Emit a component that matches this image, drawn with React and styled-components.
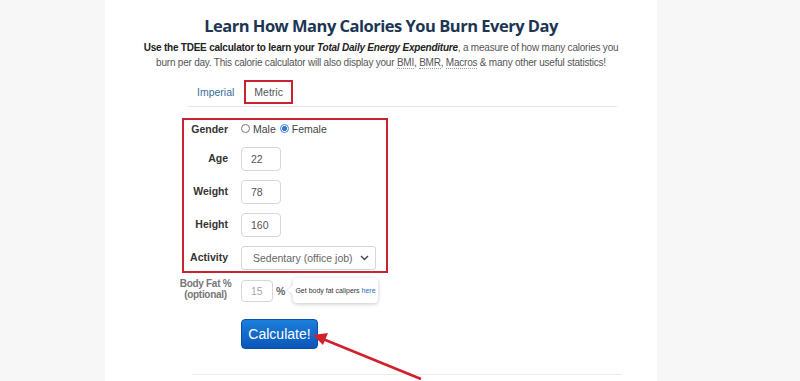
import React from "react";
import styled, { createGlobalStyle } from "styled-components";

const GlobalStyle = createGlobalStyle`
  html, body { margin: 0; padding: 0; }
  body {
    background: #f7f7f7;
    font-family: "Liberation Sans", Arial, sans-serif;
    color: #333;
  }
`;

const Page = styled.div`
  position: relative;
  width: 552px;
  min-height: 381px;
  margin-left: 105px;
  background: #fff;
  overflow: hidden;
`;

const Title = styled.h1`
  margin: 0;
  padding-top: 15px;
  text-align: center;
  font-family: "Open Sans", sans-serif;
  font-weight: 700;
  font-size: 16.5px;
  line-height: 22px;
  letter-spacing: -0.5px;
  color: #1c3553;
`;

const Intro = styled.p`
  margin: 4px auto 0;
  text-align: center;
  font-size: 10px;
  letter-spacing: -0.22px;
  line-height: 14.5px;
  color: #555;
  b { color: #222; }
  abbr {
    text-decoration: none;
    border-bottom: 1px dotted #999;
  }
`;

const Line = styled.span`
  display: block;
  white-space: nowrap;
`;

const Tabs = styled.div`
  display: flex;
  align-items: center;
  gap: 10px;
  margin: 11px 0 0 82px;
  width: 430px;
  height: 26px;
  padding-left: 10px;
  box-sizing: border-box;
  border-bottom: 1px solid #e8e8e8;
  padding-bottom: 3px;
`;

const Tab = styled.span`
  font-size: 10.5px;
  color: ${(p) => (p.$active ? "#555" : "#3b6e9c")};
  padding: ${(p) => (p.$active ? "4px 8px" : "0")};
  border: ${(p) => (p.$active ? "2px solid #c8232f" : "none")};
`;

const Form = styled.div`
  margin: 11px 0 0 77px;
  display: flex;
  flex-direction: column;
  align-items: flex-start;
`;

const Highlight = styled.div`
  display: grid;
  grid-template-columns: 42px 135px;
  column-gap: 13px;
  row-gap: 9px;
  align-items: center;
  border: 2px solid #c8232f;
  padding: 0 10px 1px 2px;
`;

const Label = styled.label`
  font-size: 10.5px;
  font-weight: 700;
  color: #333;
  text-align: right;
  white-space: nowrap;
  margin-top: ${(p) => (p.$nudge ? "-3px" : "0")};
`;

const RadioGroup = styled.div`
  height: 19px;
  display: flex;
  align-items: center;
  font-size: 10.5px;
  color: #444;
  gap: 4px;
  margin-top: -1px;
`;

const RadioOption = styled.span`
  display: inline-flex;
  align-items: center;
  gap: 3px;
`;

const RadioDot = styled.span`
  width: 7px;
  height: 7px;
  border-radius: 50%;
  border: 1px solid ${(p) => (p.$checked ? "#3b82d6" : "#777")};
  background: ${(p) =>
    p.$checked ? "radial-gradient(circle, #2f7bd3 0 2.2px, #fff 2.6px)" : "#fff"};
`;

const Input = styled.div`
  width: ${(p) => p.$w || 40}px;
  height: ${(p) => p.$h || 24}px;
  box-sizing: border-box;
  border: 1px solid #d6d6d6;
  border-radius: 4px;
  display: flex;
  align-items: center;
  padding-left: 9px;
  font-size: 10.5px;
  color: ${(p) => (p.$faint ? "#aaa" : "#555")};
`;

const Select = styled.div`
  width: 135px;
  height: 24px;
  box-sizing: border-box;
  border: 1px solid #d6d6d6;
  border-radius: 3px;
  display: flex;
  align-items: center;
  justify-content: space-between;
  padding: 0 6px 0 11px;
  font-size: 10.5px;
  color: #666;
`;

const FatRow = styled.div`
  display: grid;
  grid-template-columns: 42px auto auto auto;
  column-gap: 13px;
  align-items: center;
  margin-top: 5px;
  padding-left: 4px;
`;

const FatLabel = styled.div`
  display: flex;
  flex-direction: column;
  align-items: center;
  font-size: 10px;
  font-weight: 700;
  letter-spacing: -0.3px;
  line-height: 10.5px;
  color: #777;
  white-space: nowrap;
  margin: -2px 0 0 -3px;
`;

const Percent = styled.span`
  font-size: 10.5px;
  font-weight: 700;
  color: #666;
  margin-left: -10px;
`;

const Callout = styled.div`
  position: relative;
  margin-left: -6px;
  width: 85px;
  height: 25px;
  box-sizing: border-box;
  background: #fff;
  border-radius: 4px;
  box-shadow: 0 1px 4px rgba(0, 0, 0, 0.22);
  display: flex;
  align-items: center;
  justify-content: center;
  font-size: 7px;
  color: #333;
  white-space: nowrap;
  a { color: #2b6cb0; text-decoration: none; }
  &::before {
    content: "";
    position: absolute;
    left: -6px;
    top: 7px;
    width: 0;
    height: 0;
    border-top: 5px solid transparent;
    border-bottom: 5px solid transparent;
    border-right: 6px solid #fff;
    filter: drop-shadow(-1px 0 0 rgba(0,0,0,0.1));
  }
`;

const Button = styled.button`
  margin: 16px 0 0 59px;
  width: 77px;
  height: 30px;
  border: 1px solid #0a4fa8;
  border-radius: 4px;
  background: linear-gradient(#1c7fdc, #0a56b8);
  color: #fff;
  font-family: "Liberation Sans", Arial, sans-serif;
  font-size: 14px;
  padding: 0;
`;

const Divider = styled.div`
  margin: 25px 0 0 87px;
  width: 430px;
  border-top: 1px solid #ececec;
`;

const Arrow = styled.svg`
  position: absolute;
  left: 0;
  top: 0;
  width: 552px;
  height: 381px;
  pointer-events: none;
`;

export default function App() {
  return (
    <>
      <GlobalStyle />
      <Page>
        <Title>Learn How Many Calories You Burn Every Day</Title>
        <Intro>
          <Line>
            <b>Use the TDEE calculator to learn your </b>
            <b><i>Total Daily Energy Expenditure</i></b>, a measure of how many calories you
          </Line>
          <Line>
            burn per day. This calorie calculator will also display your <abbr>BMI</abbr>,{" "}
            <abbr>BMR</abbr>, <abbr>Macros</abbr> &amp; many other useful statistics!
          </Line>
        </Intro>
        <Tabs>
          <Tab>Imperial</Tab>
          <Tab $active>Metric</Tab>
        </Tabs>
        <Form>
          <Highlight>
            <Label>Gender</Label>
            <RadioGroup>
              <RadioOption>
                <RadioDot />
                Male
              </RadioOption>
              <RadioOption>
                <RadioDot $checked />
                Female
              </RadioOption>
            </RadioGroup>
            <Label $nudge>Age</Label>
            <Input>22</Input>
            <Label $nudge>Weight</Label>
            <Input>78</Input>
            <Label $nudge>Height</Label>
            <Input>160</Input>
            <Label $nudge>Activity</Label>
            <Select>
              Sedentary (office job)
              <svg width="9" height="6" viewBox="0 0 9 6">
                <path d="M1 1l3.5 3.5L8 1" fill="none" stroke="#444" strokeWidth="1.4" />
              </svg>
            </Select>
          </Highlight>
          <FatRow>
            <FatLabel>
              <span>Body Fat %</span>
              <span>(optional)</span>
            </FatLabel>
            <Input $w={32} $h={22} $faint>15</Input>
            <Percent>%</Percent>
            <Callout>
              Get body fat calipers&nbsp;<a href="#">here</a>
            </Callout>
          </FatRow>
          <Button>Calculate!</Button>
        </Form>
        <Divider />
        <Arrow viewBox="0 0 552 381">
          <line x1="316" y1="379" x2="213" y2="337" stroke="#d0202c" strokeWidth="2.6" />
          <path d="M208 335 L223 333 L218 345 Z" fill="#d0202c" />
        </Arrow>
      </Page>
    </>
  );
}
